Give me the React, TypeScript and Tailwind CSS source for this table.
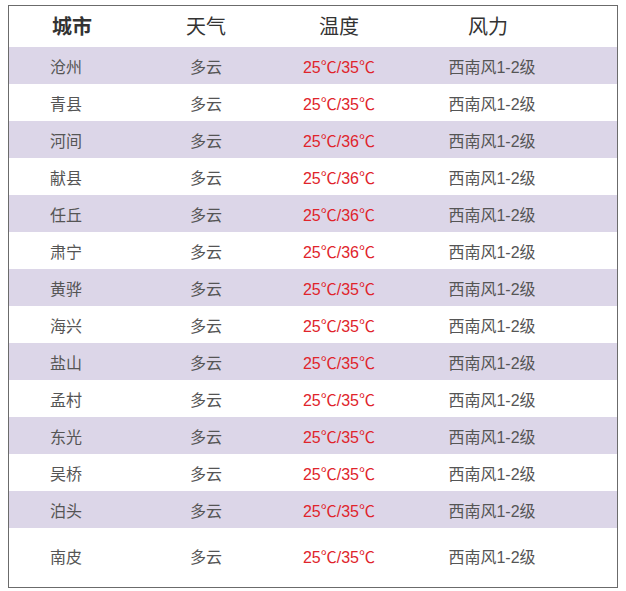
import React from "react";

const rows: [string, string][] = [
  ["沧州", "25℃/35℃"],
  ["青县", "25℃/35℃"],
  ["河间", "25℃/36℃"],
  ["献县", "25℃/36℃"],
  ["任丘", "25℃/36℃"],
  ["肃宁", "25℃/36℃"],
  ["黄骅", "25℃/35℃"],
  ["海兴", "25℃/35℃"],
  ["盐山", "25℃/35℃"],
  ["孟村", "25℃/35℃"],
  ["东光", "25℃/35℃"],
  ["吴桥", "25℃/35℃"],
  ["泊头", "25℃/35℃"],
  ["南皮", "25℃/35℃"],
];

const font = { fontFamily: '"Liberation Sans", "Noto Sans CJK SC", sans-serif' };

export default function App() {
  return (
    <div className="w-[626px] h-[591px] bg-white pt-[5px] pl-[8px]" style={font}>
      <div className="w-[610px] h-[583px] border border-[#6b6b6b] flex flex-col">
        {/* header */}
        <div className="h-[41px] flex items-center text-[20px] text-[#333] shrink-0">
          <div className="w-[122px] pl-[43px] font-bold">城市</div>
          <div className="w-[150px] text-center">天气</div>
          <div className="w-[116px] text-center">温度</div>
          <div className="w-[182px] text-center">风力</div>
        </div>

        {rows.map(([city, temp], i) => {
          const last = i === rows.length - 1;
          return (
            <div
              key={city}
              className={
                (i % 2 === 0 ? "bg-[#dcd6e8] " : "bg-white ") +
                (last ? "flex-1 " : "h-[37px] pt-[5px] shrink-0 ") +
                "flex items-center text-[16px] text-[#555]"
              }
            >
              <div className="w-[122px] pl-[41px]">{city}</div>
              <div className="w-[150px] text-center">多云</div>
              <div className="w-[116px] text-center text-[#e0242b]">{temp}</div>
              <div className="w-[190px] text-center">西南风1-2级</div>
            </div>
          );
        })}
      </div>
    </div>
  );
}
